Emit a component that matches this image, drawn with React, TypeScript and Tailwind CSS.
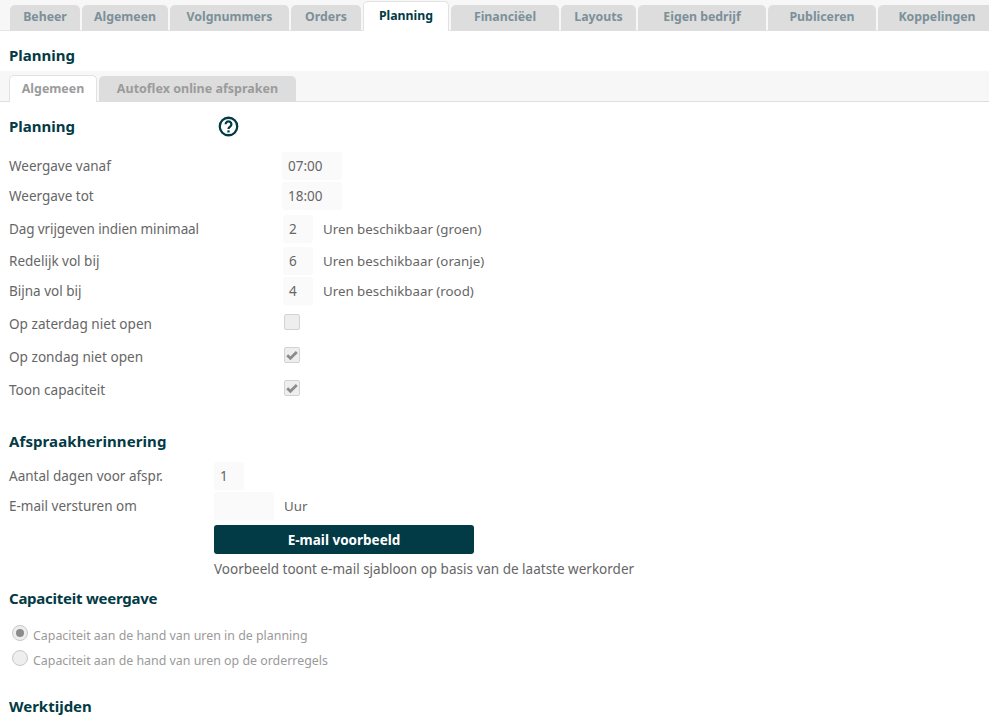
const mainTabs = [
  { label: "Beheer", w: "w-[70px]" },
  { label: "Algemeen", w: "w-[86px]" },
  { label: "Volgnummers", w: "w-[119px]" },
  { label: "Orders", w: "w-[70px]" },
  { label: "Planning", w: "w-[86px]", active: true },
  { label: "Financiëel", w: "w-[108px]" },
  { label: "Layouts", w: "w-[75px]" },
  { label: "Eigen bedrijf", w: "w-[128px]" },
  { label: "Publiceren", w: "w-[108px]" },
  { label: "Koppelingen", w: "w-[118px]" },
];

function Heading({ children, className }: { children: React.ReactNode; className?: string }) {
  return (
    <h2 className={`text-[15px] leading-5 font-bold text-[#023a45] ${className ?? ""}`}>{children}</h2>
  );
}

function Field({ value, w }: { value?: string; w: string }) {
  return (
    <div className={`${w} h-7 shrink-0 rounded-[3px] bg-[#fafafa] pl-[6px] text-[13.5px] leading-7 text-[#666]`}>
      {value}
    </div>
  );
}

function InputRow({ label, value, w, after, inputLeft, className }: {
  label: React.ReactNode;
  value?: string;
  w: string;
  after?: string;
  inputLeft: string;
  className?: string;
}) {
  return (
    <div className={`flex h-7 items-center ${className ?? ""}`}>
      <span className={`${inputLeft} shrink-0 text-[13.5px] text-[#666]`}>{label}</span>
      <Field value={value} w={w} />
      {after && <span className="ml-[10px] translate-y-px text-[13.3px] text-[#666]">{after}</span>}
    </div>
  );
}

function CheckRow({ label, checked, className }: { label: string; checked?: boolean; className?: string }) {
  return (
    <div className={`flex h-4 items-center ${className ?? ""}`}>
      <span className="w-[275px] shrink-0 translate-y-[2px] text-[13.6px] text-[#666]">{label}</span>
      <span className="flex size-4 items-center justify-center rounded-[2px] border border-[#d3d3d3] bg-[#eeeeee]">
        {checked && (
          <svg viewBox="0 0 14 14" className="size-[14px]">
            <path d="M2.2 7.2l3.2 3.1 6.4-6.2" fill="none" stroke="#8c8c8c" strokeWidth="2.8" />
          </svg>
        )}
      </span>
    </div>
  );
}

function RadioRow({ label, checked, className }: { label: string; checked?: boolean; className?: string }) {
  return (
    <div className={`flex h-4 items-center ${className ?? ""}`}>
      <span className="flex size-4 shrink-0 items-center justify-center rounded-full border border-[#c8c8c8] bg-[#eeeeee]">
        {checked && <span className="size-2 rounded-full bg-[#8c8c8c]" />}
      </span>
      <span className="ml-[5px] translate-y-[3px] text-[12.4px] text-[#9a9a9a]">{label}</span>
    </div>
  );
}

export default function App() {
  return (
    <div className="h-[719px] w-[989px] overflow-hidden bg-white font-['Noto_Sans',sans-serif]">
      {/* main tabs */}
      <div className="flex h-[31px] items-end gap-[2px] border-b border-[#e6e6e6] bg-[#f7f7f7] pl-[10px]">
        {mainTabs.map((t) =>
          t.active ? (
            <div
              key={t.label}
              className={`${t.w} relative -mb-px flex h-[30px] shrink-0 items-center justify-center rounded-t-[5px] border border-b-0 border-[#e2e2e2] bg-white text-[12.3px] font-bold text-[#023a45]`}
            >
              {t.label}
            </div>
          ) : (
            <div
              key={t.label}
              className={`${t.w} -mb-px flex h-[26px] shrink-0 items-center justify-center rounded-t-[5px] bg-[#dddddd] pb-[2px] text-[12.3px] font-bold text-[#7b9098]`}
            >
              {t.label}
            </div>
          ),
        )}
      </div>

      <Heading className="mt-[14px] ml-[9px]">Planning</Heading>

      {/* sub tabs */}
      <div className="mt-[6px] flex h-[31px] items-end gap-[2px] border-b border-[#dedede] bg-[#f7f7f7] pl-[9px]">
        <div className="relative -mb-px flex h-[27px] w-[88px] items-center justify-center rounded-t-[5px] border border-b-0 border-[#e2e2e2] bg-white text-[12.4px] font-bold text-[#9b9b9b]">
          Algemeen
        </div>
        <div className="flex h-[25px] w-[197px] items-center justify-center rounded-t-[5px] bg-[#dddddd] pt-px text-[12.5px] font-bold text-[#9b9b9b]">
          Autoflex online afspraken
        </div>
      </div>

      <div className="pl-[9px]">
        <div className="mt-[14px] flex h-5 items-center">
          <Heading className="w-[209px]">Planning</Heading>
          <svg viewBox="0 0 24 24" className="size-[21px]" fill="none" stroke="#023a45">
            <circle cx="12" cy="12" r="10" strokeWidth="2.6" />
            <path d="M8.7 9.4a3.3 3.3 0 1 1 5 2.9c-1.1.7-1.7 1.2-1.7 2.5" strokeWidth="2.6" />
            <path d="M12 16.4v2.4" strokeWidth="2.6" />
          </svg>
        </div>

        <InputRow className="mt-[16px]" inputLeft="w-[273px]" label="Weergave vanaf" value="07:00" w="w-[60px]" />
        <InputRow className="mt-[2px]" inputLeft="w-[273px]" label="Weergave tot" value="18:00" w="w-[60px]" />
        <InputRow
          className="mt-[5px]"
          inputLeft="w-[274px]"
          label={<span className="tracking-[-0.1px]">Dag vrijgeven indien minimaal</span>}
          value="2"
          w="w-[30px]"
          after="Uren beschikbaar (groen)"
        />
        <InputRow className="mt-[4px]" inputLeft="w-[274px]" label="Redelijk vol bij" value="6" w="w-[30px]" after="Uren beschikbaar (oranje)" />
        <InputRow className="mt-[2px]" inputLeft="w-[274px]" label="Bijna vol bij" value="4" w="w-[30px]" after="Uren beschikbaar (rood)" />

        <CheckRow className="mt-[9px]" label="Op zaterdag niet open" />
        <CheckRow className="mt-[17px]" label="Op zondag niet open" checked />
        <CheckRow className="mt-[17px]" label="Toon capaciteit" checked />

        <Heading className="mt-[35px] tracking-[0.1px]">Afspraakherinnering</Heading>

        <InputRow className="mt-[11px]" inputLeft="w-[205px]" label="Aantal dagen voor afspr." value="1" w="w-[30px]" />
        <InputRow className="mt-[2px]" inputLeft="w-[205px]" label="E-mail versturen om" w="w-[60px]" after="Uur" />

        <button className="mt-[5px] ml-[205px] block h-[29px] w-[260px] rounded-[3px] bg-[#023a45] pt-px text-[13.5px] font-bold text-white">
          E-mail voorbeeld
        </button>
        <p className="mt-[5px] ml-[205px] text-[13.5px] leading-[20px] text-[#666]">
          Voorbeeld toont e-mail sjabloon op basis van de laatste werkorder
        </p>

        <Heading className="mt-[9px] tracking-[-0.25px]">Capaciteit weergave</Heading>

        <RadioRow className="mt-[17px] ml-[3px]" label="Capaciteit aan de hand van uren in de planning" checked />
        <RadioRow className="mt-[9px] ml-[3px]" label="Capaciteit aan de hand van uren op de orderregels" />

        <Heading className="mt-[30px]">Werktijden</Heading>
      </div>
    </div>
  );
}
